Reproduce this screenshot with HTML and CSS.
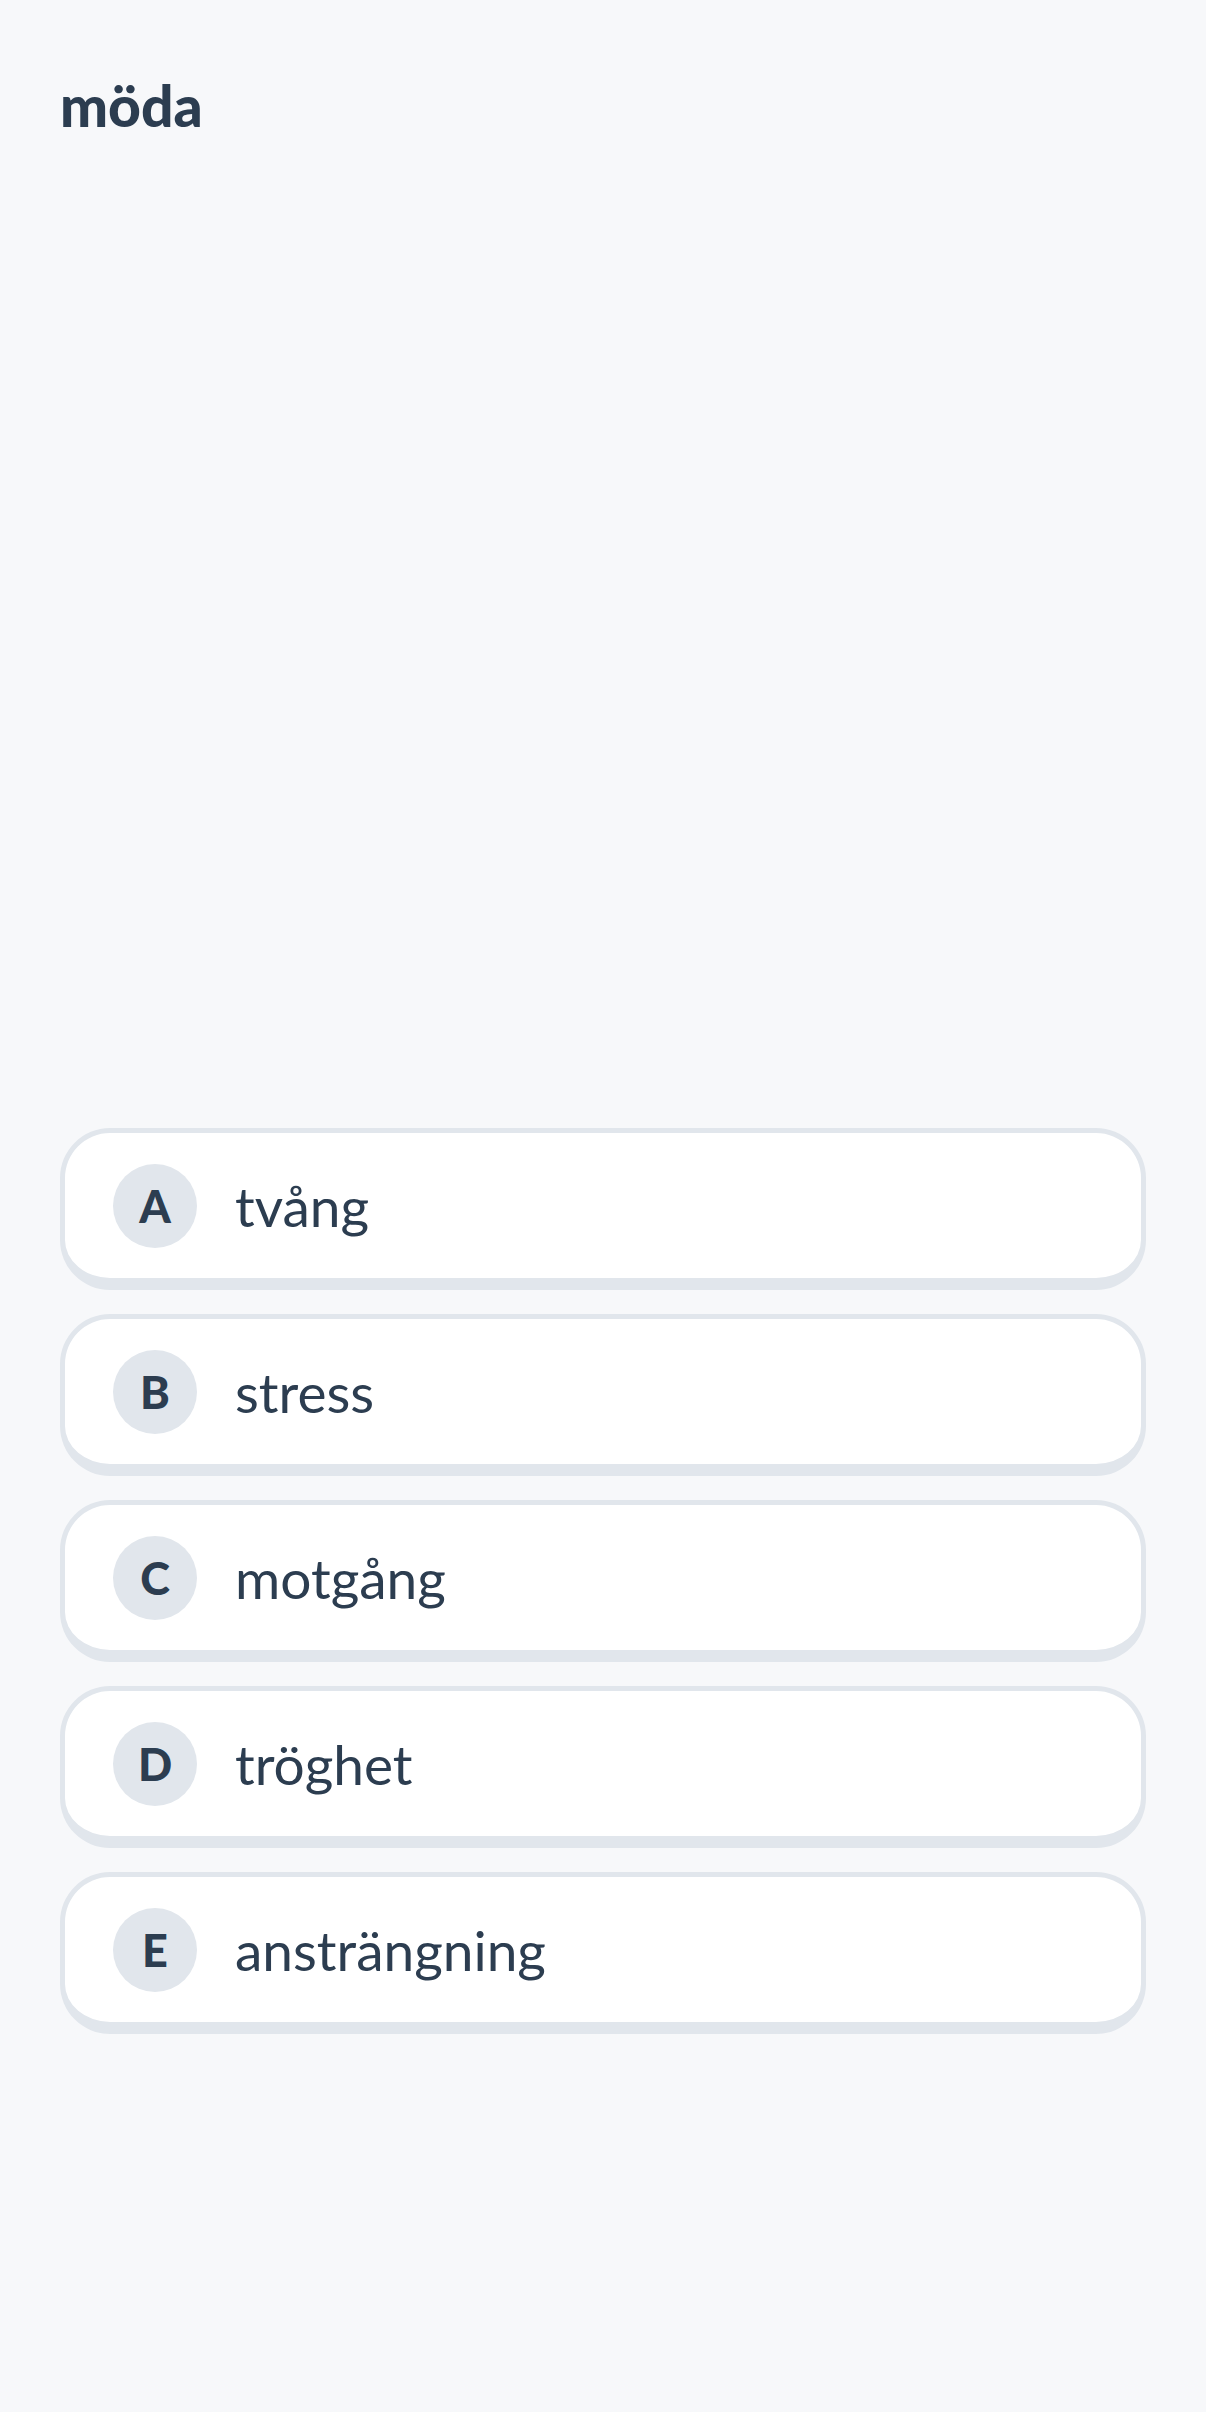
FILE: index.html
```html
<!DOCTYPE html>
<html lang="sv">
<head>
  <meta charset="UTF-8">
  <meta name="viewport" content="width=device-width, initial-scale=1.0">
  <title>Quiz</title>
  <link rel="stylesheet" href="styles.css">
</head>
<body>

  <div class="quiz">
    <h1 class="word">möda</h1>

    <div class="options">
      <button class="option"><span class="letter">A</span><span class="answer">tvång</span></button>
      <button class="option"><span class="letter">B</span><span class="answer">stress</span></button>
      <button class="option"><span class="letter">C</span><span class="answer">motgång</span></button>
      <button class="option"><span class="letter">D</span><span class="answer">tröghet</span></button>
      <button class="option"><span class="letter">E</span><span class="answer">ansträngning</span></button>
    </div>
  </div>

</body>
</html>
```

FILE: styles.css
```css
body {
  font-family: 'Lato', 'Liberation Sans', sans-serif;
  background: #f7f8fa;
  color: #2c3d50;
  margin: 0;
}

.quiz {
  height: 100vh;
  box-sizing: border-box;
  padding: 73px 60px 378px;
  display: flex;
  flex-direction: column;
}

.word {
  margin: 0;
  font-size: 57px;
  font-weight: 900;
  line-height: 64px;
  flex: 1;
}

.options {
  display: flex;
  flex-direction: column;
  gap: 24px;
}

.option {
  display: flex;
  align-items: center;
  gap: 38px;
  height: 162px;
  box-sizing: border-box;
  padding: 0 48px;
  background: #fff;
  border: 5px solid #e1e6ec;
  border-bottom-width: 12px;
  border-radius: 50px;
  font-family: inherit;
  color: inherit;
  text-align: left;
  cursor: pointer;
}

.letter {
  width: 84px;
  height: 84px;
  flex-shrink: 0;
  border-radius: 50%;
  background: #e1e6ec;
  display: flex;
  justify-content: center;
  align-items: center;
  font-size: 45px;
  font-weight: 900;
}

.answer {
  font-size: 55px;
  font-weight: 400;
}
```
